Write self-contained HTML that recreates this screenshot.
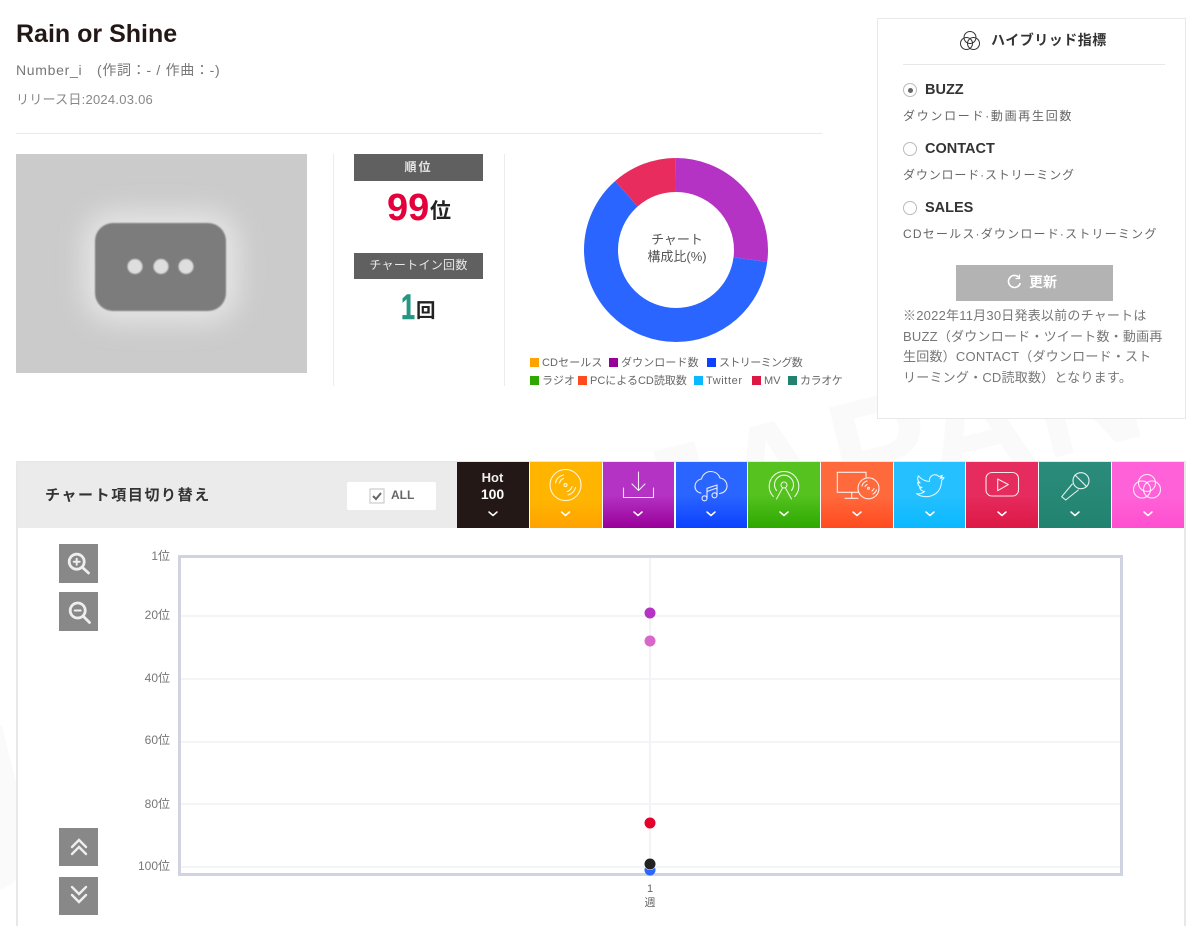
<!DOCTYPE html>
<html lang="ja"><head><meta charset="utf-8"><title>Rain or Shine</title>
<style>
*{box-sizing:border-box;margin:0;padding:0}
html,body{width:1200px;height:926px;overflow:hidden;background:#fff}
body{position:relative;font-family:"Liberation Sans","Noto Sans CJK JP",sans-serif;color:#333}
.a{position:absolute;white-space:nowrap}
.wm{position:absolute;font-weight:bold;color:#fafafa;white-space:nowrap;transform-origin:0 0}
.lab{position:absolute;left:354px;width:129px;background:#606060;color:#e8e8e8;text-align:center;font-size:12px}
.leg{position:absolute;font-size:11px;color:#666;white-space:nowrap;padding-left:12px;line-height:16px;letter-spacing:.1px}
.leg i{position:absolute;left:0;top:2.5px;width:9px;height:9px}
.radio{position:absolute;left:903px;width:14px;height:14px;border:1px solid #bbb;border-radius:50%;background:#fff}
.rl{position:absolute;left:925px;font-size:14.5px;font-weight:bold;color:#333;line-height:17px}
.rd{position:absolute;left:903px;font-size:12px;color:#666;line-height:16px;white-space:nowrap}
.tab{position:absolute;top:462px;height:66px;width:71.5px}
.gb{position:absolute;left:59px;width:39px;height:39px;background:#888}
.yl{position:absolute;right:1030px;font-size:12px;color:#777;line-height:14px;white-space:nowrap}
.gl{position:absolute;left:181px;width:939px;height:2px;background:#f3f4f7}
</style></head><body>
<div class="wm" style="left:615px;top:425px;font-size:150px;transform:rotate(-14deg);letter-spacing:5px">JAPAN</div>
<div class="wm" style="left:-120px;top:700px;font-size:230px;transform:rotate(-14deg)">JAPAN</div>

<div class="a" style="left:16px;top:19px;font-size:25px;line-height:30px;font-weight:bold;color:#231815">Rain or Shine</div>
<div class="a" style="left:16px;top:60px;font-size:14px;line-height:20px;color:#777;letter-spacing:.7px">Number_i　(作詞：- / 作曲：-)</div>
<div class="a" style="left:16px;top:92px;font-size:13px;line-height:16px;color:#888;letter-spacing:.25px">リリース日:2024.03.06</div>
<div class="a" style="left:16px;top:133px;width:806px;height:1px;background:#e9e9e9"></div>

<svg class="a" style="left:16px;top:154px" width="291" height="219" viewBox="0 0 291 219">
<defs><filter id="b" x="-20%" y="-20%" width="140%" height="140%" color-interpolation-filters="sRGB"><feGaussianBlur stdDeviation=".8"/></filter>
<filter id="s" x="-30%" y="-30%" width="160%" height="160%" color-interpolation-filters="sRGB"><feGaussianBlur stdDeviation="14"/></filter></defs>
<rect width="291" height="219" fill="#cbcbcb"/>
<rect x="68" y="58" width="154" height="110" rx="30" fill="#e6e6e6" filter="url(#s)"/>
<rect x="79" y="69" width="131" height="88" rx="18" fill="#7c7c7c" filter="url(#b)"/>
<circle cx="119" cy="112.500" r="7.500" fill="#dedede" filter="url(#b)"/><circle cx="145" cy="112.500" r="7.500" fill="#dedede" filter="url(#b)"/><circle cx="170" cy="112.500" r="7.500" fill="#dedede" filter="url(#b)"/>
</svg>
<div class="a" style="left:333px;top:154px;width:1px;height:232px;background:#ececec"></div>
<div class="a" style="left:504px;top:154px;width:1px;height:232px;background:#ececec"></div>

<div class="lab" style="top:154px;height:27px;line-height:26px;font-weight:bold;letter-spacing:2px">順位</div>
<div class="a" style="left:387px;top:186px;font-size:38px;line-height:44px;font-weight:bold;color:#e4003a">99</div>
<div class="a" style="left:430px;top:199px;font-size:21px;line-height:26px;font-weight:bold;color:#222">位</div>
<div class="lab" style="top:253px;height:26px;line-height:24px;letter-spacing:.3px">チャートイン回数</div>
<div class="a" style="left:401px;top:288px;font-size:35px;line-height:40px;font-weight:bold;color:#249683;transform:scaleX(.72);transform-origin:0 0;-webkit-text-stroke:.6px #249683">1</div>
<div class="a" style="left:416px;top:298px;font-size:19.500px;line-height:26px;font-weight:bold;color:#222">回</div>

<svg class="a" style="left:580px;top:154px" width="192" height="192" viewBox="0 0 192 192">
<g transform="rotate(-90 96 96)" fill="none" stroke-width="34">
<circle cx="96" cy="96" r="75" stroke="#b533c4" pathLength="360" stroke-dasharray="97.500 262.500"/>
<circle cx="96" cy="96" r="75" stroke="#2b65ff" pathLength="360" stroke-dasharray="221.500 138.500" stroke-dashoffset="-97.500"/>
<circle cx="96" cy="96" r="75" stroke="#e82c5e" pathLength="360" stroke-dasharray="41 319" stroke-dashoffset="-319"/>
</g>
</svg>
<div class="a" style="left:617px;top:231px;width:120px;text-align:center;font-size:13px;line-height:17px;color:#555">チャート<br>構成比(%)</div>

<div class="leg" style="left:530px;top:355px"><i style="background:#ffa200"></i>CDセールス</div>
<div class="leg" style="left:609px;top:355px"><i style="background:#990099"></i>ダウンロード数</div>
<div class="leg" style="left:707px;top:355px;letter-spacing:-.6px"><i style="background:#0b41ff"></i>ストリーミング数</div>
<div class="leg" style="left:530px;top:373px"><i style="background:#2ea800"></i>ラジオ</div>
<div class="leg" style="left:578px;top:373px;letter-spacing:0"><i style="background:#ff4b1f"></i>PCによるCD読取数</div>
<div class="leg" style="left:694px;top:373px;letter-spacing:.6px"><i style="background:#0ab8ff"></i>Twitter</div>
<div class="leg" style="left:752px;top:373px"><i style="background:#dc1845"></i>MV</div>
<div class="leg" style="left:788px;top:373px;letter-spacing:-.4px"><i style="background:#21836f"></i>カラオケ</div>

<!-- right panel -->
<div class="a" style="left:877px;top:18px;width:309px;height:401px;background:#fff;border:1px solid #e8e8e8"></div>
<svg class="a" style="left:959px;top:30px" width="22" height="22" viewBox="0 0 22 22" fill="none" stroke="#333" stroke-width="1"><circle cx="11" cy="7.500" r="6"/><circle cx="7.500" cy="13.500" r="6"/><circle cx="14.500" cy="13.500" r="6"/></svg>
<div class="a" style="left:991px;top:30px;font-size:14px;line-height:20px;font-weight:bold;color:#333;letter-spacing:.5px">ハイブリッド指標</div>
<div class="a" style="left:903px;top:64px;width:262px;height:1px;background:#e8e8e8"></div>
<div class="radio" style="top:83px"></div><div class="a" style="left:907.500px;top:87.500px;width:5px;height:5px;border-radius:50%;background:#666"></div>
<div class="rl" style="top:82px">BUZZ</div><div class="rd" style="top:108px;letter-spacing:1.7px">ダウンロード·動画再生回数</div>
<div class="radio" style="top:142px"></div>
<div class="rl" style="top:141px">CONTACT</div><div class="rd" style="top:167px;letter-spacing:.85px">ダウンロード·ストリーミング</div>
<div class="radio" style="top:201px"></div>
<div class="rl" style="top:200px">SALES</div><div class="rd" style="top:226px;letter-spacing:1.2px">CDセールス·ダウンロード·ストリーミング</div>
<div class="a" style="left:956px;top:265px;width:157px;height:36px;background:#b3b3b3"></div>
<svg class="a" style="left:1006px;top:273px" width="17" height="17" viewBox="0 0 17 17" fill="none" stroke="#fff" stroke-width="1.600"><path d="M13 4.500A6 6 0 1 0 14.300 10"/><path d="M13.500 1.500V5.500H9.500" stroke-width="1.200"/></svg>
<div class="a" style="left:1029px;top:272px;font-size:14px;line-height:20px;font-weight:bold;color:#fff">更新</div>
<div class="a" style="left:903px;top:306px;font-size:13px;line-height:20.500px;color:#777;letter-spacing:.22px">※2022年11月30日発表以前のチャートは<br>BUZZ（ダウンロード・ツイート数・動画再<br>生回数）CONTACT（ダウンロード・スト<br>リーミング・CD読取数）となります。</div>

<!-- chart panel -->
<div class="a" style="left:16px;top:461px;width:1170px;height:480px;background:#fff;border:2px solid #e8e8e8"></div>
<div class="a" style="left:18px;top:463px;width:440px;height:65px;background:#ebebeb"></div>
<div class="a" style="left:45px;top:485px;font-size:15px;line-height:22px;font-weight:bold;color:#333;letter-spacing:1.600px">チャート項目切り替え</div>
<div class="a" style="left:347px;top:482px;width:89px;height:28px;background:#fff;border-radius:2px"></div>
<svg class="a" style="left:369px;top:488px" width="16" height="16" viewBox="0 0 16 16"><rect x="1" y="1" width="14" height="14" fill="#fff" stroke="#ccc" stroke-width="1.200"/><path d="M4 8L7 11L12 5" fill="none" stroke="#666" stroke-width="2"/></svg>
<div class="a" style="left:391px;top:487px;font-size:12px;line-height:16px;font-weight:bold;color:#666">ALL</div>

<div class="tab" style="left:457px;background:#231815"></div>
<div class="tab" style="left:530px;background:linear-gradient(#ffb400 60%,#ffa200)"></div>
<div class="tab" style="left:602.500px;background:linear-gradient(#b533c4 50%,#990099)"></div>
<div class="tab" style="left:675.500px;background:linear-gradient(#2b65ff 50%,#0b41ff)"></div>
<div class="tab" style="left:748px;background:linear-gradient(#55c21f 50%,#2ea800)"></div>
<div class="tab" style="left:821px;background:linear-gradient(#ff6a3d 50%,#ff4b1f)"></div>
<div class="tab" style="left:893.500px;background:linear-gradient(#25c0ff 50%,#0ab8ff)"></div>
<div class="tab" style="left:966px;background:linear-gradient(#e62c5e 50%,#dc1845)"></div>
<div class="tab" style="left:1039px;background:linear-gradient(#2c8c7c,#21836f)"></div>
<div class="tab" style="left:1112px;width:72px;background:linear-gradient(#ff62d8 50%,#ff4fcf)"></div>
<div class="a" style="left:457px;top:469px;width:71px;text-align:center;font-size:13px;line-height:17px;font-weight:bold;color:#eee">Hot<br><span style="font-size:14px;color:#fff">100</span></div>

<svg class="a" style="left:0;top:0" width="1200" height="926" viewBox="0 0 1200 926" fill="none" stroke="#fff" stroke-width="1.100" stroke-linecap="round" stroke-linejoin="round" stroke-opacity=".88">
<g stroke-width="1.500" stroke-opacity="1"><path d="M489 512l4 3.500 4-3.500M561.500 512l4 3.500 4-3.500M634 512l4 3.500 4-3.500M707 512l4 3.500 4-3.500M780 512l4 3.500 4-3.500M853 512l4 3.500 4-3.500M926 512l4 3.500 4-3.500M998 512l4 3.500 4-3.500M1071 512l4 3.500 4-3.500M1144 512l4 3.500 4-3.500"/></g>
<!-- cd -->
<circle cx="565.500" cy="485" r="15.500"/><circle cx="565.500" cy="485" r="1.500"/><path d="M555.500 483a10 10 0 0 1 8-8M559.500 483a6.500 6.500 0 0 1 4-4.500M567 491.500a7 7 0 0 0 5-5M568 495a11 11 0 0 0 7.500-7.500"/>
<!-- download -->
<path d="M638.500 472V490.500M632 484l6.500 6.500 6.500-6.500M623.500 488V497.500H653.500V488"/>
<!-- cloud music -->
<path d="M701 493c-4-.5-6-3.500-6-6.500 0-4 3-7 6.500-7.500 1-4.500 5-7.500 9-7.500 4.500 0 8 2.500 9.500 6.500 4 .5 7 4 7 8s-3 7-7.500 7.500"/><path d="M707 488.300V498M707 488.300L717 485V495M707 491.500L717 488"/><circle cx="704.500" cy="498.300" r="2.500"/><circle cx="714.500" cy="495.300" r="2.500"/>
<!-- radio -->
<circle cx="784" cy="485" r="3"/><path d="M776.500 490.500a9.500 9.500 0 1 1 15 0M773.300 496.500a14.800 14.800 0 1 1 21.400 0"/><path d="M782.500 488L776.500 499M785.500 488L791.500 499" stroke-width="1"/>
<!-- pc -->
<path d="M858 492.300H837.300V472.300H866V477M851.700 492.300V498.300M845 498.300H858"/>
<circle cx="868.500" cy="488.300" r="10.500" fill="#ff6a3d"/><circle cx="868.500" cy="488.300" r="1"/><path d="M862 486a7 7 0 0 1 5-5M865 486.500a4 4 0 0 1 2-2M872 491a4.500 4.500 0 0 0 2-2.500M873 494a8 8 0 0 0 3.500-4"/>
<!-- twitter -->
<path d="M943 477.500c-1 .5-2 .8-3 .8 1-.6 2-1.800 2.300-3-1 .6-2.200 1-3.400 1.300a5.400 5.400 0 0 0-9.300 4.900c-4.500-.2-8.500-2.400-11.200-5.700-1.400 2.500-.7 5.600 1.700 7.200-.9 0-1.700-.3-2.400-.7 0 2.600 1.800 4.800 4.300 5.300-.8.2-1.600.2-2.400.1.700 2.100 2.700 3.700 5 3.700-2.300 1.800-5.300 2.700-8 2.400 10 6.500 25 2 25-13.500 1-.7 1.800-1.600 2.400-2.800z"/>
<!-- yt -->
<rect x="986" y="472.500" width="32.500" height="23.500" rx="6"/><path d="M997.700 479L1008.300 484.500L997.700 490.700Z"/>
<!-- mic -->
<circle cx="1081" cy="480.700" r="8"/><path d="M1075 475L1086.700 486.700M1072.300 484L1061.700 496.700L1065.700 500L1078.300 490"/>
<!-- hybrid -->
<circle cx="1147" cy="483" r="8.500"/><circle cx="1142" cy="489.500" r="8.500"/><circle cx="1152" cy="489.500" r="8.500"/>
</svg>

<!-- side buttons -->
<div class="gb" style="top:544px"></div><div class="gb" style="top:592px"></div><div class="gb" style="top:828px;height:38px"></div><div class="gb" style="top:877px;height:38px"></div>
<svg class="a" style="left:0;top:0" width="300" height="926" viewBox="0 0 300 926" fill="none" stroke="#eee" stroke-width="2.800" stroke-linecap="round">
<circle cx="76.700" cy="561.700" r="7.500"/><path d="M82.500 567.500L88.500 573"/><path d="M73.700 561.700H79.700M76.700 558.700V564.700" stroke-width="2"/>
<circle cx="77.700" cy="610.500" r="7.500"/><path d="M83.500 616.500L89.500 622.500"/><path d="M74.700 610.500H80.700" stroke-width="2"/>
<path d="M72 847L79 840L86 847M72 854L79 847L86 854" stroke-width="2.400"/>
<path d="M72 887L79 894L86 887M72 895L79 902L86 895" stroke-width="2.400"/>
</svg>

<!-- chart -->
<div class="a" style="left:178px;top:555px;width:945px;height:321px;border:3px solid #d0d4e0"></div>
<div class="gl" style="top:615px"></div><div class="gl" style="top:678px"></div><div class="gl" style="top:741px"></div><div class="gl" style="top:803px"></div><div class="gl" style="top:866px"></div>
<div class="a" style="left:649px;top:558px;width:2px;height:315px;background:#f3f3f6"></div>
<div class="yl" style="top:549px">1位</div><div class="yl" style="top:608px">20位</div><div class="yl" style="top:671px">40位</div><div class="yl" style="top:733px">60位</div><div class="yl" style="top:797px">80位</div><div class="yl" style="top:859px">100位</div>
<svg class="a" style="left:640px;top:600px" width="20" height="280" viewBox="0 0 20 280"><circle cx="10" cy="13" r="5.500" fill="#b533c4"/><circle cx="10" cy="41" r="5.500" fill="#d966c9"/><circle cx="10" cy="223" r="5.500" fill="#e6002d"/><circle cx="10" cy="270" r="5.500" fill="#2b65ff"/><circle cx="10" cy="264" r="6" fill="#fff"/><circle cx="10" cy="264" r="5.500" fill="#222"/></svg>
<div class="a" style="left:630px;top:882px;width:40px;text-align:center;font-size:11px;line-height:14px;color:#666">1<br>週</div>
</body></html>
